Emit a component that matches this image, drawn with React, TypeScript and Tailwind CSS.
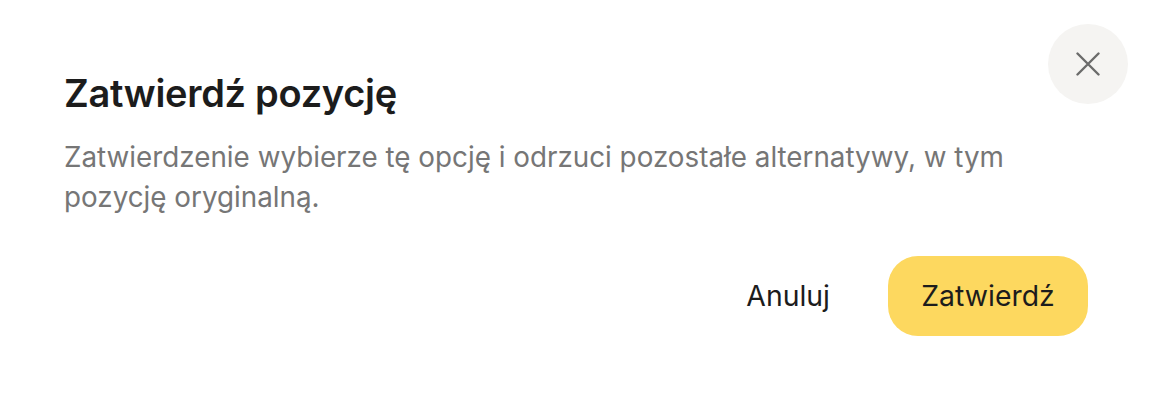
import React from "react";

export default function App() {
  return (
    <div className="relative w-[1152px] h-[400px] bg-white" style={{ fontFamily: "Inter, 'Noto Sans', sans-serif" }}>
      <button className="absolute right-6 top-6 w-20 h-20 rounded-full bg-[#f5f4f2] flex items-center justify-center">
        <svg width="24" height="24" viewBox="0 0 24 24" fill="none" stroke="#6b6b6b" strokeWidth="2.4" strokeLinecap="round">
          <path d="M1.5 1.5l21 21M22.5 1.5l-21 21" />
        </svg>
      </button>
      <div className="flex flex-col px-16 pt-[69px]">
        <h1 className="text-[38px] leading-[48px] font-semibold text-[#1c1c1c] tracking-[-0.3px]">Zatwierdź pozycję</h1>
        <p className="mt-[20px] text-[27.8px] leading-[40px] text-[#767676] w-[990px]">
          Zatwierdzenie wybierze tę opcję i odrzuci pozostałe alternatywy, w tym pozycję oryginalną.
        </p>
        <div className="mt-[39px] flex justify-end gap-[26px]">
          <button className="h-20 px-8 text-[28.4px] font-normal text-[#1c1c1c]">Anuluj</button>
          <button className="h-20 w-[200px] rounded-[30px] bg-[#fdd85f] text-[28.4px] font-normal text-[#1c1c1c]">Zatwierdź</button>
        </div>
      </div>
    </div>
  );
}
